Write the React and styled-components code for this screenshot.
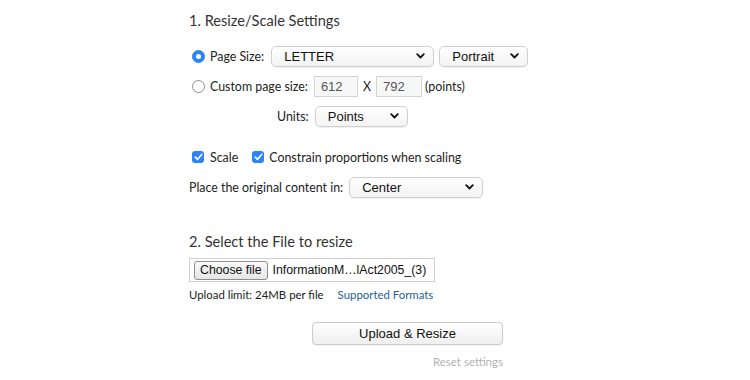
import React from 'react'
import styled, { createGlobalStyle } from 'styled-components'

const GlobalStyle = createGlobalStyle`
  body {
    margin: 0;
    background: #fff;
    font-family: Lato, "Open Sans", sans-serif;
    color: #222;
  }
`

const Page = styled.div`
  width: 372px;
  margin: 0 auto;
  padding-top: 11px;
  display: flex;
  flex-direction: column;
`

const Heading = styled.h2`
  margin: ${(p) => p.top || 0}px 0 ${(p) => p.gap || 0}px;
  height: 20px;
  line-height: 20px;
  font-size: 14.6px;
  font-weight: 400;
  color: #333;
`

const Row = styled.div`
  display: flex;
  align-items: center;
  height: 30px;
  padding-left: ${(p) => p.indent || 0}px;
  margin-top: ${(p) => p.top || 0}px;
  font-size: 12.4px;
`

const Label = styled.span`
  margin-right: ${(p) => p.gap || 6}px;
  white-space: nowrap;
`

const Radio = styled.span`
  box-sizing: border-box;
  width: 13px;
  height: 13px;
  margin: 0 5px 0 3px;
  border-radius: 50%;
  border: 1px solid ${(p) => (p.checked ? '#2a7ef2' : '#8d8d8d')};
  background: ${(p) => (p.checked ? '#2f84f4' : '#fff')};
  display: flex;
  align-items: center;
  justify-content: center;
  &::after {
    content: '';
    width: 5px;
    height: 5px;
    border-radius: 50%;
    background: #fff;
    display: ${(p) => (p.checked ? 'block' : 'none')};
  }
`

const Check = styled.span`
  box-sizing: border-box;
  width: 12px;
  height: 12px;
  margin: 0 ${(p) => p.after || 6}px 0 ${(p) => p.before || 3}px;
  border-radius: 3px;
  background: #2f84f4;
  display: flex;
  align-items: center;
  justify-content: center;
`

const SelectBox = styled.div`
  box-sizing: border-box;
  width: ${(p) => p.w}px;
  height: 21px;
  margin-right: ${(p) => p.gap || 0}px;
  padding: 0 8px 0 12px;
  display: flex;
  align-items: center;
  justify-content: space-between;
  border: 1px solid #cfcfcf;
  border-radius: 5px;
  background: linear-gradient(#ffffff, #f3f3f3);
  box-shadow: 0 1px 1px rgba(0, 0, 0, 0.06);
  font-family: "Liberation Sans", Arial, sans-serif;
  font-size: 13px;
  color: #111;
`

const NumberInput = styled.div`
  box-sizing: border-box;
  width: ${(p) => p.w}px;
  height: 21px;
  padding-left: 6px;
  display: flex;
  align-items: center;
  border: 1px solid #d4d4d4;
  background: #f7f7f7;
  font-family: "Liberation Sans", Arial, sans-serif;
  font-size: 13px;
  color: #555;
`

const Times = styled.span`
  margin: 0 5px 0 5px;
`

const FileBox = styled.div`
  box-sizing: border-box;
  width: 246px;
  height: 24px;
  margin-top: 6px;
  padding-left: 4px;
  display: flex;
  align-items: center;
  border: 1px solid #d0d0d0;
  font-family: "Liberation Sans", Arial, sans-serif;
  font-size: 12.3px;
  color: #111;
  white-space: nowrap;
`

const FileButton = styled.div`
  box-sizing: border-box;
  flex-shrink: 0;
  height: 19px;
  padding: 0 5px;
  margin-right: 5px;
  display: flex;
  align-items: center;
  border: 1px solid #8e8e8e;
  border-radius: 3px;
  background: linear-gradient(#fafafa, #e6e6e6);
`

const Note = styled.div`
  display: flex;
  align-items: center;
  height: 20px;
  margin-top: 2px;
  font-size: 11.4px;
`

const Link = styled.a`
  margin-left: 14px;
  color: #1d5f96;
  text-decoration: none;
`

const Actions = styled.div`
  width: 314px;
  margin-top: 18px;
  display: flex;
  flex-direction: column;
  align-items: flex-end;
`

const Button = styled.div`
  box-sizing: border-box;
  width: 191px;
  height: 23px;
  display: flex;
  align-items: center;
  justify-content: center;
  border: 1px solid #cbcbcb;
  border-radius: 4px;
  background: linear-gradient(#ffffff, #efefef);
  box-shadow: 0 1px 1px rgba(0, 0, 0, 0.05);
  font-family: "Liberation Sans", Arial, sans-serif;
  font-size: 13px;
  color: #111;
`

const Reset = styled.div`
  margin-top: 8px;
  height: 18px;
  line-height: 18px;
  font-size: 11.5px;
  color: #b3b3b3;
`

const Chevron = () => (
  <svg width="9" height="6" viewBox="0 0 9 6">
    <path d="M1.2 1.2 L4.5 4.5 L7.8 1.2" fill="none" stroke="#111" strokeWidth="1.8" strokeLinecap="round" strokeLinejoin="round" />
  </svg>
)

const Tick = () => (
  <svg width="9" height="8" viewBox="0 0 9 8">
    <path d="M1.3 4.2 L3.5 6.3 L7.7 1.5" fill="none" stroke="#fff" strokeWidth="1.7" strokeLinecap="round" strokeLinejoin="round" />
  </svg>
)

const Select = ({ w, gap, children }) => (
  <SelectBox w={w} gap={gap}>
    <span>{children}</span>
    <Chevron />
  </SelectBox>
)

const App = () => {
  return (
    <>
      <GlobalStyle />
      <Page>
        <Heading gap={10}>1. Resize/Scale Settings</Heading>
        <Row>
          <Radio checked />
          <Label gap={7}>Page Size:</Label>
          <Select w={163} gap={5}>LETTER</Select>
          <Select w={89}>Portrait</Select>
        </Row>
        <Row>
          <Radio />
          <Label gap={6}>Custom page size:</Label>
          <NumberInput w={44}>612</NumberInput>
          <Times>X</Times>
          <NumberInput w={46}>792</NumberInput>
          <Label>&nbsp;(points)</Label>
        </Row>
        <Row indent={88}>
          <Label gap={6}>Units:</Label>
          <Select w={93}>Points</Select>
        </Row>
        <Row top={11}>
          <Check before={3} after={6}><Tick /></Check>
          <Label gap={2}>Scale</Label>
          <Check before={12} after={5}><Tick /></Check>
          <Label>Constrain proportions when scaling</Label>
        </Row>
        <Row>
          <Label gap={6}>Place the original content in:</Label>
          <Select w={134}>Center</Select>
        </Row>
        <Heading top={30}>2. Select the File to resize</Heading>
        <FileBox>
          <FileButton>Choose file</FileButton>
          <span>InformationM…lAct2005_(3)</span>
        </FileBox>
        <Note>
          Upload limit: 24MB per file
          <Link href="#">Supported Formats</Link>
        </Note>
        <Actions>
          <Button>Upload &amp; Resize</Button>
          <Reset>Reset settings</Reset>
        </Actions>
      </Page>
    </>
  )
}

export default App
